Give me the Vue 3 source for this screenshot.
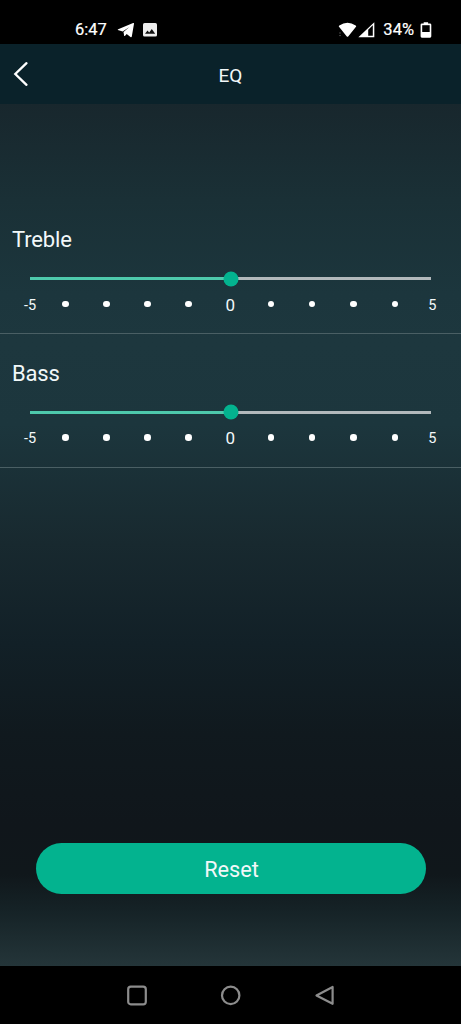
<script setup>
import { ref } from 'vue'

const bands = ref([
  { name: 'Treble', value: 0 },
  { name: 'Bass', value: 0 },
])
const ticks = ['-5', '', '', '', '', '0', '', '', '', '', '5']

const percent = (value) => ((value + 5) / 10) * 100 + '%'
const reset = () => bands.value.forEach((band) => (band.value = 0))
</script>

<template>
  <div class="screen">
    <div class="status">
      <span class="clock">6:47</span>
      <svg class="plane" width="18" height="16" viewBox="0 0 18 16">
        <path d="M.8 8.100Q.4 7.700 1.200 7.300L16.100 1Q17.200.7 17 1.800L14.800 14.400Q14.500 15.600 13.500 15L9.700 12.100 7.900 13.900Q7.200 14.400 7.100 13.400L6.500 9.900 12.400 4.900 5.700 9.500Z" fill="#fff" />
      </svg>
      <svg class="photo" width="14" height="14" viewBox="0 0 14 14">
        <rect width="14" height="13.6" rx="1.6" fill="#eee" />
        <path d="M2 10.8 4.5 7.4 6.2 9.4 8.8 6 12.2 10.8Z" fill="#111" />
      </svg>
      <span class="spacer"></span>
      <svg class="wifi" width="19" height="16" viewBox="0 0 19 16">
        <path d="M1.200 5.100Q.4 4.200 1.300 3.500 9.500-1.800 17.700 3.500 18.600 4.200 17.800 5.100L10.400 14.200Q9.500 15.200 8.600 14.200Z" fill="#fff" />
        <path d="M1 11h2M1 13.6h2" stroke="#444" stroke-width="1" />
      </svg>
      <svg class="signal" width="17" height="16" viewBox="0 0 17 16">
        <path d="M.4 15.3 16.3.2V15.3Z" fill="#fff" />
        <path d="M10.200 7.700 14.800 3.300V13.800H10.200Z" fill="#000" />
      </svg>
      <span class="charge">34%</span>
      <svg class="battery" width="12" height="16" viewBox="0 0 12 16">
        <path d="M3.700.2h4.400v1.300h1.800q1.400 0 1.400 1.300v11.500q0 1.400-1.300 1.400H1.900Q.6 15.700.6 14.300V2.800Q.6 1.500 1.900 1.500H3.700Z" fill="#fff" />
        <path d="M2.200 3.200H9.700V10H2.200Z" fill="#000" />
      </svg>
    </div>

    <header class="header">
      <svg class="back" width="16" height="26" viewBox="0 0 16 26">
        <path d="M13.500 2.200 2.300 13 13.500 23.800" fill="none" stroke="#fff" stroke-width="2.300" stroke-linecap="round" />
      </svg>
      <h1>EQ</h1>
    </header>

    <main>
      <section v-for="band in bands" :key="band.name" class="band">
        <h2>{{ band.name }}</h2>
        <div class="track">
          <div class="fill" :style="{ width: percent(band.value) }"></div>
          <div class="knob" :style="{ left: percent(band.value) }"></div>
        </div>
        <div class="scale">
          <span v-for="(tick, i) in ticks" :key="i" :class="tick === '0' ? 'zero' : tick ? 'end' : 'dot'">{{ tick }}</span>
        </div>
      </section>
      <button class="reset" @click="reset">Reset</button>
    </main>

    <nav class="nav">
      <svg width="22" height="22" viewBox="0 0 22 22"><rect x="2.200" y="2.700" width="17.600" height="17.600" rx="2.600" /></svg>
      <svg width="22" height="22" viewBox="0 0 22 22"><circle cx="10.700" cy="11.400" r="8.700" /></svg>
      <svg width="22" height="22" viewBox="0 0 22 22"><path d="M18.600 3V19.800L2.500 11.400Z" stroke-linejoin="round" /></svg>
    </nav>
  </div>
</template>

<style>
body {
  margin: 0;
  background: #000;
}
</style>

<style scoped>
.screen {
  width: 461px;
  height: 1024px;
  display: flex;
  flex-direction: column;
  overflow: hidden;
  background: #000;
  color: #f2f8f9;
  font-family: Roboto, "Liberation Sans", sans-serif;
}
.status {
  height: 44px;
  box-sizing: border-box;
  padding: 15px 29px 0 75px;
  display: flex;
  align-items: center;
  flex: none;
  font-size: 16.5px;
  line-height: 29px;
  color: #fff;
  -webkit-text-stroke: 0.2px #fff;
}
.status svg {
  flex: none;
}
.clock {
  width: 32px;
}
.plane {
  margin-left: 9.5px;
}
.photo {
  margin-left: 8.5px;
}
.spacer {
  flex: 1;
}
.signal {
  margin-left: 1px;
}
.charge {
  margin-left: 8px;
}
.battery {
  margin-left: 6px;
}
.header {
  height: 60px;
  flex: none;
  display: grid;
  grid-template-columns: 60px 1fr 60px;
  align-items: center;
  background: #0a222a;
}
.back {
  margin: 0 0 0 13px;
}
h1,
h2 {
  margin: 0;
  font-weight: 400;
}
h1 {
  font-size: 19px;
  line-height: 24px;
  text-align: center;
  padding-top: 3px;
}
main {
  height: 862px;
  box-sizing: border-box;
  padding-top: 96px;
  display: flex;
  flex-direction: column;
  background: linear-gradient(#18272d 0, #1a3036 96px, #1c363d 190px, #1d373e 240px, #1c363d 320px, #18292f 440px, #122027 540px, #10191e 630px, #10161b 720px, #10171b 770px, #152226 805px, #243539 862px);
}
.band {
  height: 134px;
  flex: none;
  box-sizing: border-box;
  padding-top: 25px;
  border-bottom: 1px solid #4a5f64;
}
.band + .band {
  padding-top: 24.500px;
}
h2 {
  padding-left: 12px;
  font-size: 22px;
  line-height: 30px;
  letter-spacing: -0.15px;
}
.track {
  position: relative;
  height: 3px;
  margin: 22px 30px 0;
  background: #b2b9bc;
}
.fill {
  height: 100%;
  background: #4ec9ac;
}
.knob {
  position: absolute;
  top: 50%;
  width: 15px;
  height: 15px;
  border-radius: 50%;
  background: #03b38f;
  transform: translate(-50%, -50%);
}
.scale {
  display: grid;
  grid-template-columns: 29.600px repeat(5, 41px) repeat(4, 41.400px) 34.200px;
  grid-template-rows: 20px;
  height: 20px;
  margin: 14px 0 0 15.200px;
  align-items: center;
  justify-items: center;
  line-height: 20px;
}
.end {
  font-size: 14.500px;
  padding-top: 3px;
}
.zero {
  font-size: 17px;
  padding: 1px 0 0 2px;
}
.dot {
  width: 6.400px;
  height: 6.400px;
  margin: 0 0 0 0.600px;
  border-radius: 50%;
  background: #fff;
}
.reset {
  margin: auto 35.500px 72px;
  height: 51px;
  flex: none;
  padding: 2px 0 0 2px;
  border: 0;
  border-radius: 26px;
  background: #03b38f;
  color: #f2f8f9;
  font: inherit;
  font-size: 21.700px;
}
.nav {
  height: 58px;
  flex: none;
  display: flex;
  align-items: center;
  justify-content: center;
  gap: 72px;
}
.nav svg {
  fill: none;
  stroke: #8c8c8c;
  stroke-width: 2.200;
}
</style>
